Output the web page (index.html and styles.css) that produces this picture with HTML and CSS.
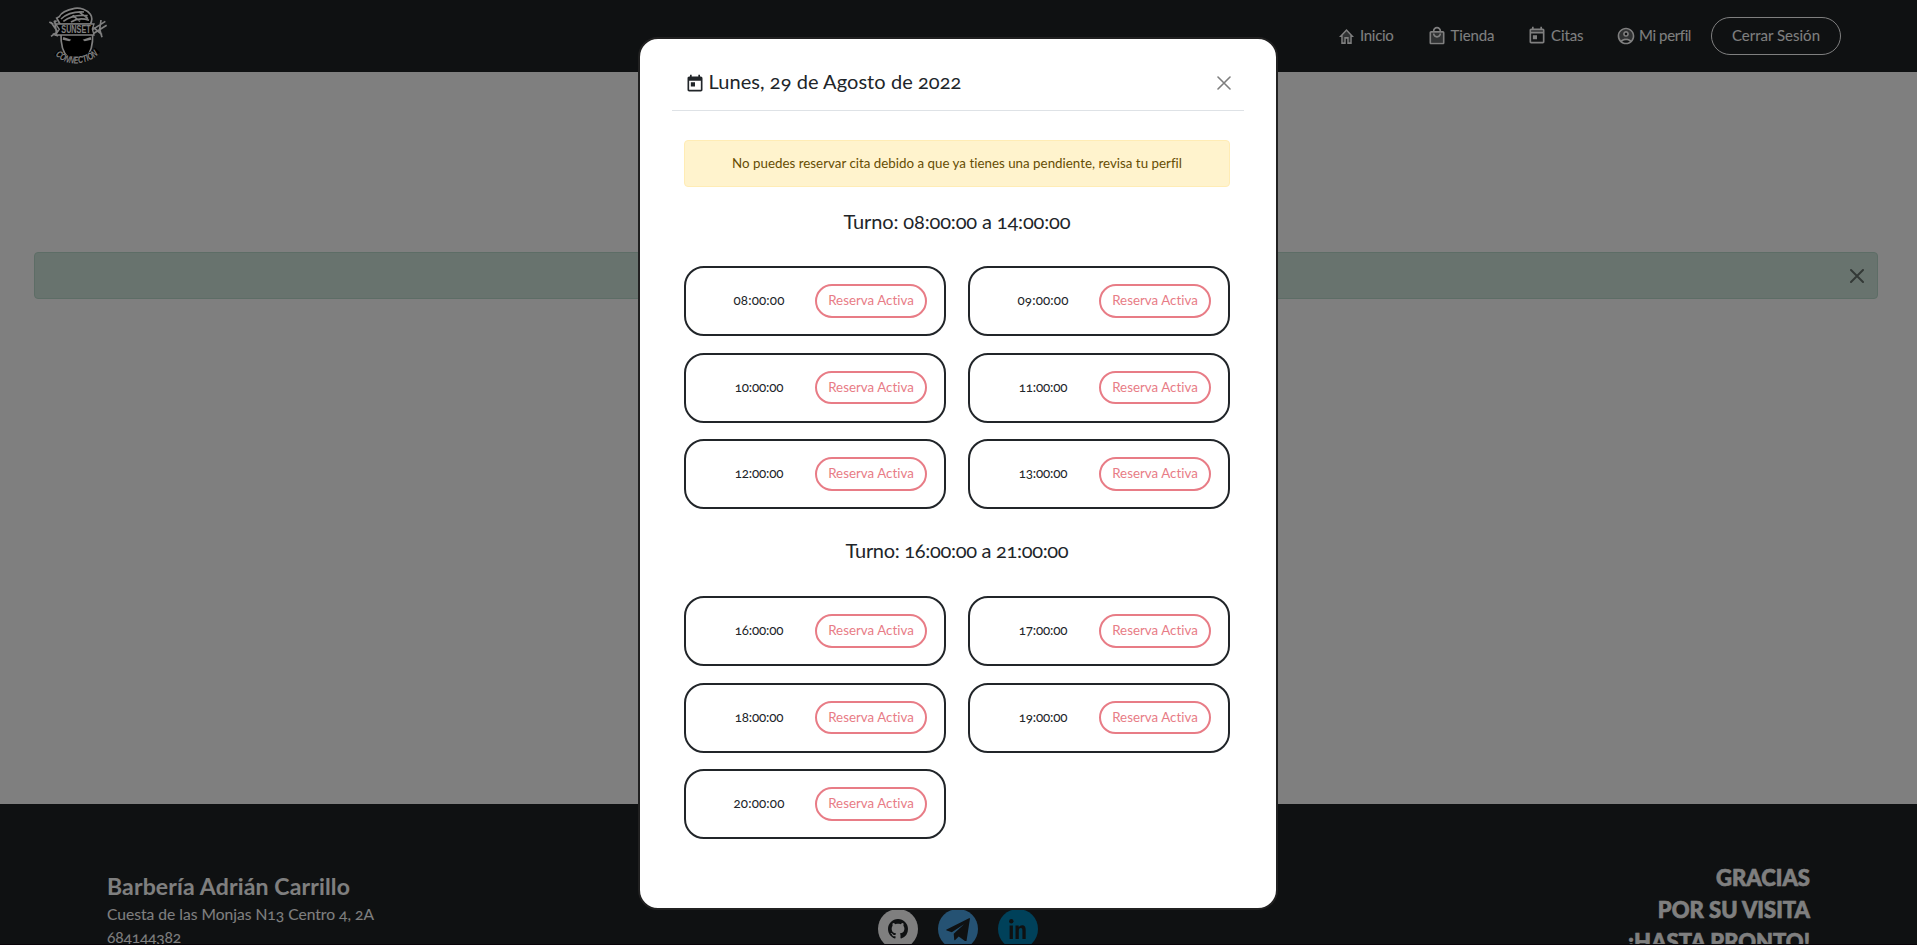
FILE: index.html
```
<!DOCTYPE html>
<html lang="es">
<head>
<meta charset="utf-8">
<title>Barbería Adrián Carrillo</title>
<link rel="stylesheet" href="styles.css">
</head>
<body>
<header class="navbar">
  <svg class="logo" viewBox="0 0 300 216" width="100" height="72">
    <path d="M93 100 C92 130 96 156 114 172 L168 172 C186 156 189 132 188 100Z" fill="#000" stroke="#fff" stroke-width="5"/>
    <path d="M90 72 L80 54 L88 50 C94 36 108 30 134 25 C150 22 172 30 181 43 C188 53 186 63 181 73Z" fill="#000" stroke="#fff" stroke-width="5"/>
    <path d="M93 57 C110 41 130 34 162 36 M100 64 C121 48 142 43 173 47 M123 66 C142 54 160 55 177 61 M128 46 L150 64 M146 35 L174 56" fill="none" stroke="#fff" stroke-width="5"/>
    <path d="M63 67 L87 101 M74 61 L80 104 M58 66 L70 73 M71 67 L80 62 M63 109 L84 94 M68 101 L84 108" fill="none" stroke="#fff" stroke-width="5"/>
    <path d="M184 91 L226 64 M188 102 L230 76 M213 60 L209 88 L216 112 M190 82 L216 104" fill="none" stroke="#fff" stroke-width="5"/>
    <path d="M77 72 H192 L187 87 L192 105 H77 L88 88Z" fill="#000" stroke="#fff" stroke-width="4"/>
    <text class="logo-name" x="94" y="99" textLength="88" lengthAdjust="spacingAndGlyphs">SUNSET</text>
    <path d="M100 111 L124 119 L118 124 L98 119Z M182 111 L158 119 L164 124 L184 119Z" fill="#fff"/>
    <path id="arc" d="M76 165 C108 200 172 199 209 158" fill="none"/>
    <path d="M80 157 C112 188 168 188 202 150" fill="none" stroke="#000" stroke-width="20"/>
    <text class="logo-sub"><textPath href="#arc" textLength="142" lengthAdjust="spacingAndGlyphs">CONNECTION</textPath></text>
  </svg>
  <nav class="menu">
    <a class="item home"><svg viewBox="2 3 20 17" preserveAspectRatio="none" width="15" height="15"><path d="M12 5.69 7 10.19V18h2v-6h6v6h2v-7.81l-5-4.5z" opacity=".3"/><path d="M12 3 2 12h3v8h6v-6h2v6h6v-8h3L12 3zm5 15h-2v-6H9v6H7v-7.81l5-4.5 5 4.5V18z"/></svg><span>Inicio</span></a>
    <a class="item shop"><svg viewBox="0 0 24 24" width="20" height="20"><path d="M5 8h14v12H5z" opacity=".3"/><path d="M19 6h-2c0-2.76-2.24-5-5-5S7 3.24 7 6H5c-1.1 0-2 .9-2 2v12c0 1.1.9 2 2 2h14c1.1 0 2-.9 2-2V8c0-1.1-.9-2-2-2zm-7-3c1.66 0 3 1.34 3 3H9c0-1.66 1.34-3 3-3zm7 17H5V8h14v12zm-7-8c-1.66 0-3-1.34-3-3H7c0 2.76 2.24 5 5 5s5-2.24 5-5h-2c0 1.66-1.34 3-3 3z"/></svg><span>Tienda</span></a>
    <a class="item dates"><svg viewBox="0 0 24 24" width="20" height="20"><path d="M5 5h14v3H5z" opacity=".3"/><path d="M19 3h-1V1h-2v2H8V1H6v2H5c-1.11 0-1.99.9-1.99 2L3 19c0 1.1.89 2 2 2h14c1.1 0 2-.9 2-2V5c0-1.1-.9-2-2-2zm0 16H5V9h14v10zm0-12H5V5h14v2zM7 11h5v5H7z"/></svg><span>Citas</span></a>
    <a class="item profile"><svg viewBox="0 0 24 24" width="20" height="20"><path d="M12 4a8 8 0 0 0-6.15 13.12C7.45 15.8 9.6 15 12 15s4.55.8 6.15 2.12A8 8 0 0 0 12 4zm0 9c-1.93 0-3.5-1.57-3.5-3.5S10.07 6 12 6s3.5 1.57 3.5 3.5S13.93 13 12 13z" opacity=".3"/><path d="M12 2C6.48 2 2 6.48 2 12s4.48 10 10 10 10-4.48 10-10S17.52 2 12 2zM7.35 18.5C8.66 17.56 10.26 17 12 17s3.34.56 4.65 1.5C15.34 19.44 13.74 20 12 20s-3.34-.56-4.65-1.5zm10.79-1.38C16.45 15.8 14.32 15 12 15s-4.45.8-6.14 2.12A7.96 7.96 0 0 1 4 12c0-4.42 3.58-8 8-8s8 3.58 8 8c0 1.95-.7 3.73-1.86 5.12z"/><path d="M12 6c-1.93 0-3.5 1.57-3.5 3.5S10.07 13 12 13s3.5-1.57 3.5-3.5S13.93 6 12 6zm0 5c-.83 0-1.5-.67-1.5-1.5S11.17 8 12 8s1.5.67 1.5 1.5S12.83 11 12 11z"/></svg><span>Mi perfil</span></a>
    <a class="logout">Cerrar Sesión</a>
  </nav>
</header>

<main class="page">
  <div class="notice"><svg viewBox="0 0 14 14" width="14" height="14"><path d="M1 1 13 13M13 1 1 13" stroke="#000" stroke-width="2" stroke-linecap="round"/></svg></div>
</main>

<footer class="footer">
  <div class="contact">
    <h4>Barbería Adrián Carrillo</h4>
    <p>Cuesta de las Monjas N13 Centro 4, 2A</p>
    <p class="phone">684144382</p>
  </div>
  <div class="social">
    <span class="dot github"><svg viewBox="0 0 16 16" width="20" height="20"><path d="M8 0C3.58 0 0 3.58 0 8c0 3.54 2.29 6.53 5.47 7.59.4.07.55-.17.55-.38 0-.19-.01-.82-.01-1.49-2.01.37-2.53-.49-2.69-.94-.09-.23-.48-.94-.82-1.13-.28-.15-.68-.52-.01-.53.63-.01 1.08.58 1.23.82.72 1.21 1.87.87 2.33.66.07-.52.28-.87.51-1.07-1.78-.2-3.64-.89-3.64-3.95 0-.87.31-1.59.82-2.15-.08-.2-.36-1.02.08-2.12 0 0 .67-.21 2.2.82.64-.18 1.32-.27 2-.27s1.36.09 2 .27c1.53-1.04 2.2-.82 2.2-.82.44 1.1.16 1.92.08 2.12.51.56.82 1.27.82 2.15 0 3.07-1.87 3.75-3.65 3.95.29.25.54.73.54 1.48 0 1.07-.01 1.93-.01 2.2 0 .21.15.46.55.38A8.01 8.01 0 0 0 16 8c0-4.42-3.58-8-8-8z"/></svg></span>
    <span class="dot telegram"><svg viewBox="0 0 24 24" width="24" height="24"><path d="M.6 12.5 23 1.200c.6-.3 1 0 .9.7L20.600 23.500c-.2.9-.8 1-1.500.6l-6.400-4.600-3.500 3.400c-.5.4-.9.300-1-.4l-.5-5.800L18 7.200 5.800 15.300.7 13.600c-.7-.3-.7-.8-.1-1.100z"/></svg></span>
    <span class="dot linkedin"><svg viewBox="0 0 17 20" width="17" height="20"><circle cx="2.300" cy="2.300" r="2.200"/><path d="M.6 6.500h3.300V20H.6zM6.500 6.500h3.200v1.800c.8-1.400 2-2.100 3.500-2.100 2.700 0 3.500 1.900 3.500 4.800v9h-3.300v-8c0-1.800-.3-2.900-1.600-2.900-1.500 0-2 1.200-2 2.900v8H6.500z"/></svg></span>
  </div>
  <div class="thanks">GRACIAS<br>POR SU VISITA<br>¡HASTA PRONTO!</div>
</footer>
<div class="divider"></div>

<div class="backdrop"></div>

<section class="modal">
  <div class="modal-header">
    <svg class="cal" viewBox="0 0 24 24" width="20" height="20"><path d="M19 3h-1V1h-2v2H8V1H6v2H5c-1.11 0-1.99.9-1.99 2L3 19c0 1.1.89 2 2 2h14c1.1 0 2-.9 2-2V5c0-1.1-.9-2-2-2zm0 16H5V8h14v11zM7 10h5v5H7z"/></svg>
    <h5>Lunes, 29 de Agosto de 2022</h5>
    <svg class="close" viewBox="0 0 14 14" width="14" height="14"><path d="M1 1 13 13M13 1 1 13" stroke="#000" stroke-width="1.600" stroke-linecap="round"/></svg>
  </div>
  <div class="modal-body">
    <div class="warning">No puedes reservar cita debido a que ya tienes una pendiente, revisa tu perfil</div>
    <h5 class="shift">Turno: 08:00:00 a 14:00:00</h5>
    <div class="slots">
      <div class="slot"><span>08:00:00</span><button>Reserva Activa</button></div>
      <div class="slot"><span>09:00:00</span><button>Reserva Activa</button></div>
      <div class="slot teen"><span>10:00:00</span><button>Reserva Activa</button></div>
      <div class="slot teen"><span>11:00:00</span><button>Reserva Activa</button></div>
      <div class="slot teen"><span>12:00:00</span><button>Reserva Activa</button></div>
      <div class="slot teen"><span>13:00:00</span><button>Reserva Activa</button></div>
    </div>
    <h5 class="shift late">Turno: 16:00:00 a 21:00:00</h5>
    <div class="slots">
      <div class="slot teen"><span>16:00:00</span><button>Reserva Activa</button></div>
      <div class="slot teen"><span>17:00:00</span><button>Reserva Activa</button></div>
      <div class="slot teen"><span>18:00:00</span><button>Reserva Activa</button></div>
      <div class="slot teen"><span>19:00:00</span><button>Reserva Activa</button></div>
      <div class="slot"><span>20:00:00</span><button>Reserva Activa</button></div>
    </div>
  </div>
</section>
</body>
</html>
```
FILE: styles.css
```
* { box-sizing: border-box; }
body {
  margin: 0;
  height: 945px;
  overflow: hidden;
  display: flex;
  flex-direction: column;
  background: #fff;
  color: #212529;
  font-family: Lato, "Open Sans", sans-serif;
  font-feature-settings: "onum";
}
h4, h5, p { margin: 0; font-weight: 400; }
svg { display: block; flex: none; }

.navbar {
  height: 72px;
  flex: none;
  display: flex;
  justify-content: space-between;
  background: #1e2225;
  color: #fff;
  padding: 0 76px 0 30px;
}
.logo-name { font: 700 32px "Liberation Sans", sans-serif; fill: #fff; }
.logo-sub { font: italic 700 29px "Liberation Sans", sans-serif; fill: #fff; }
.menu { display: flex; align-items: center; height: 72px; }
.item {
  display: flex;
  align-items: center;
  font-size: 15px;
  line-height: 20px;
  fill: #fff;
}
.item span { padding-bottom: 3px; }
.home { width: 87.5px; gap: 6px; }
.shop { width: 100.5px; gap: 4px; }
.dates { width: 89px; gap: 4px; }
.profile { width: 95px; gap: 3px; }
.home span { letter-spacing: -.3px; }
.shop span, .dates span { letter-spacing: -.1px; }
.profile span { letter-spacing: -.38px; }
.logout {
  width: 130px;
  height: 38px;
  border: 1px solid #fff;
  border-radius: 19px;
  font-size: 15px;
  line-height: 35px;
  text-align: center;
}

.page { height: 732px; flex: none; padding: 180px 39px 0 34px; }
.notice {
  height: 47px;
  display: flex;
  align-items: center;
  justify-content: flex-end;
  padding-right: 13px;
  background: #d1e7dd;
  border: 1px solid #badbcc;
  border-radius: 4px;
}
.notice svg { opacity: .5; }

.footer {
  height: 140px;
  flex: none;
  overflow: hidden;
  display: grid;
  grid-template-columns: 1fr 160px 1fr;
  background: #1e2225;
  color: #fff;
  padding: 0 107px;
}
.contact { padding-top: 67.5px; font-size: 15.6px; line-height: 23px; }
.contact h4 {
  font-size: 23px;
  font-weight: 700;
  line-height: 28px;
  letter-spacing: .15px;
  margin-bottom: 3px;
}
.contact .phone { letter-spacing: -.2px; }
.social { display: flex; gap: 20px; padding-top: 105px; margin-left: -1px; }
.dot {
  width: 40px;
  height: 40px;
  flex: none;
  display: flex;
  align-items: center;
  justify-content: center;
  border-radius: 50%;
  fill: #1e2225;
}
.github { background: #fff; }
.telegram { background: #4aa5e6; }
.linkedin { background: #0082b4; }
.thanks {
  padding-top: 57.500px;
  text-align: right;
  font-size: 22px;
  font-weight: 900;
  line-height: 32px;
  -webkit-text-stroke: .6px #fff;
}
.divider { height: 1px; flex: none; background: #100610; }

.backdrop { position: fixed; inset: 0; background: rgba(0, 0, 0, .5); }

.modal {
  position: fixed;
  left: 638px;
  top: 37px;
  width: 640px;
  height: 873px;
  background: #fff;
  border: 2px solid #212121;
  border-radius: 20px;
  padding: 0 32px;
}
.modal-header {
  height: 72px;
  display: flex;
  align-items: center;
  padding: 16px 13.5px 0 12.5px;
  border-bottom: 1px solid #dee2e6;
}
.modal-header h5 {
  font-size: 20px;
  line-height: 30px;
  letter-spacing: .06px;
  margin-left: 4px;
  padding-bottom: 3px;
  flex: 1;
}
.cal { fill: #212529; margin-top: 3px; }
.close { opacity: .5; margin-top: 1px; }
.modal-body { padding: 29px 14px 0 12px; }
.warning {
  height: 47px;
  background: #fff3cd;
  border: 1px solid #ffecb5;
  border-radius: 4px;
  color: #664d03;
  font-size: 13.33px;
  line-height: 45px;
  letter-spacing: .01px;
  text-align: center;
}
.shift {
  font-size: 20px;
  line-height: 68px;
  letter-spacing: -.14px;
  text-align: center;
  padding-bottom: 11px;
}
.late { line-height: 83px; padding-bottom: 4px; letter-spacing: -.3px; }
.slots {
  display: grid;
  grid-template-columns: 262px 262px;
  grid-auto-rows: 70px;
  gap: 16.5px 22px;
}
.slot {
  display: grid;
  grid-template-columns: 112px 112px;
  align-items: center;
  padding: 0 17px;
  border: 2px solid #212529;
  border-radius: 20px;
  font-size: 13.33px;
  text-align: center;
}
.slot span { padding-bottom: 2px; letter-spacing: .15px; }
.teen span { letter-spacing: -.15px; }
.slot button {
  height: 33.5px;
  padding: 0 0 2px;
  border: 2px solid #e87c86;
  border-radius: 17px;
  background: none;
  color: #e87c86;
  font: inherit;
  letter-spacing: .01px;
}
```
